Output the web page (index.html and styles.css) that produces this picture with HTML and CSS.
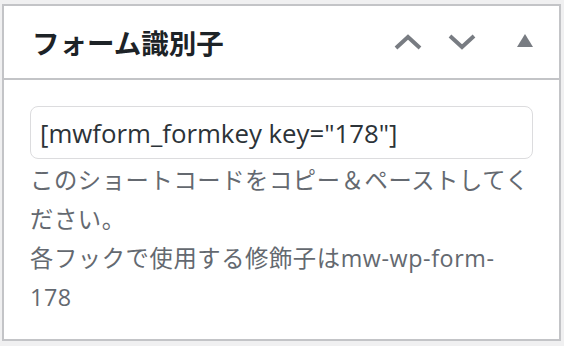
FILE: index.html
```html
<!DOCTYPE html>
<html lang="ja">

<head>
  <meta charset="UTF-8">
  <meta name="viewport" content="width=device-width, initial-scale=1.0">
  <link rel="stylesheet" href="styles.css">
  <title>フォーム識別子</title>
</head>

<body>
  <div class="postbox">
    <div class="postbox-header">
      <h2 class="hndle">フォーム識別子</h2>
      <div class="handle-actions">
        <button class="handle-btn" aria-label="上へ移動">
          <svg width="28" height="16" viewBox="0 0 28 16"><polyline points="2,14 14,3 26,14" fill="none" stroke="#787c82" stroke-width="4"/></svg>
        </button>
        <button class="handle-btn" aria-label="下へ移動">
          <svg width="28" height="16" viewBox="0 0 28 16"><polyline points="2,2 14,13 26,2" fill="none" stroke="#787c82" stroke-width="4"/></svg>
        </button>
        <button class="handle-btn toggle" aria-label="パネルを閉じる">
          <svg width="16" height="13" viewBox="0 0 16 13"><polygon points="8,0 16,13 0,13" fill="#787c82"/></svg>
        </button>
      </div>
    </div>
    <div class="inside">
      <input type="text" class="shortcode" value='[mwform_formkey key="178"]' readonly>
      <p class="description">このショートコードをコピー＆ペーストしてください。<br>各フックで使用する修飾子はmw-wp-form-178</p>
    </div>
  </div>
</body>

</html>
```

FILE: styles.css
```css
body {
  margin: 0;
  padding: 4px 3px 5px 2px;
  background-color: #f0f0f1;
  font-family: "Open Sans", "Noto Sans CJK JP", sans-serif;
}

.postbox {
  width: 559px;
  height: 337px;
  box-sizing: border-box;
  background-color: #fff;
  border: 2px solid #c3c4c7;
}

.postbox-header {
  height: 74px;
  box-sizing: border-box;
  border-bottom: 2px solid #c3c4c7;
  display: flex;
  align-items: center;
  justify-content: space-between;
  padding: 0 26px 0 28px;
}

.hndle {
  margin: 0;
  font-size: 27.5px;
  font-weight: bold;
  color: #1d2327;
}

.handle-actions {
  display: flex;
  align-items: center;
}

.handle-btn {
  background: none;
  border: none;
  padding: 0;
  display: flex;
  cursor: pointer;
}

.handle-btn + .handle-btn {
  margin-left: 26px;
}

.handle-btn.toggle {
  margin-left: 41px;
  margin-top: -3px;
}

.inside {
  padding: 26px 26px 0;
}

.shortcode {
  display: block;
  width: 100%;
  height: 53px;
  box-sizing: border-box;
  border: 1px solid #dcdcde;
  border-radius: 8px;
  padding: 0 9px;
  font-family: "Open Sans", "Noto Sans CJK JP", sans-serif;
  font-size: 25.8px;
  color: #2c3338;
}

.description {
  margin: 2px 0 0;
  font-size: 23.3px;
  letter-spacing: 0.6px;
  line-height: 39px;
  color: #646970;
}
```
